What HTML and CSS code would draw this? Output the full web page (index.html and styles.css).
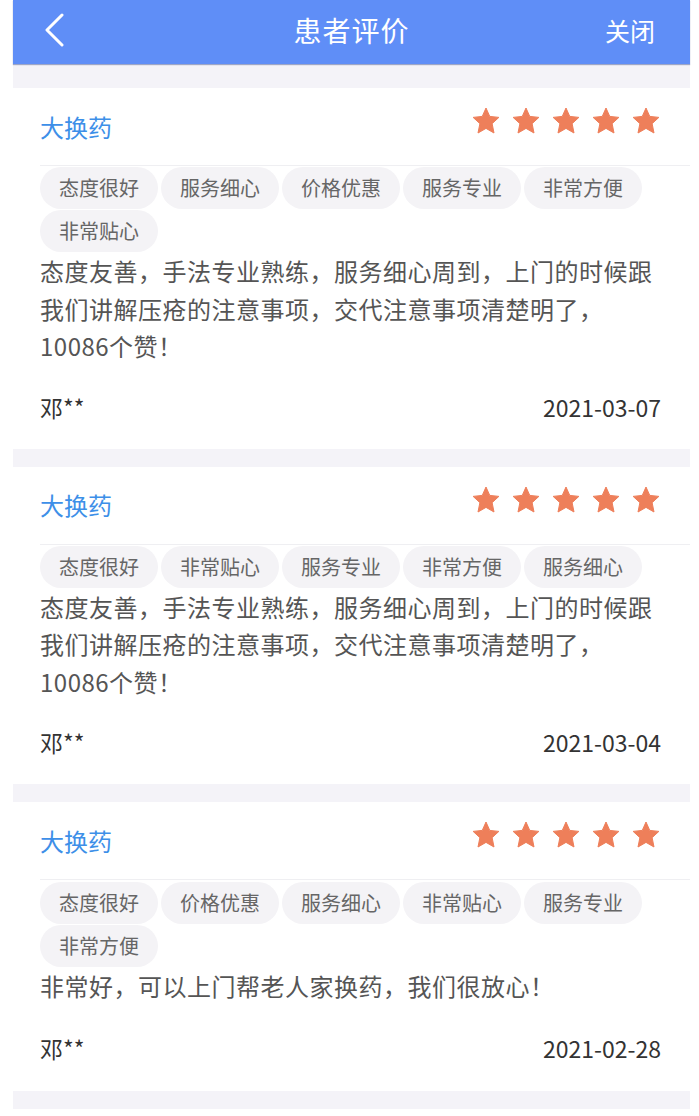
FILE: index.html
```html
<!DOCTYPE html>
<html lang="zh-CN">
<head>
<meta charset="utf-8">
<title>患者评价</title>
<link rel="stylesheet" href="styles.css">
</head>
<body>
<div class="app">
  <header class="nav">
    <span class="nav-back">
      <svg width="20" height="34" viewBox="0 0 20 34"><polyline points="17,2 2,17 17,32" fill="none" stroke="#fff" stroke-width="3" stroke-linecap="round" stroke-linejoin="round"/></svg>
    </span>
    <h1 class="nav-title">患者评价</h1>
    <span class="nav-close">关闭</span>
  </header>
  <main class="list">
    <section class="card">
      <div class="card-head">
        <span class="service">大换药</span>
        <span class="stars">
          <svg class="star" viewBox="0 0 24 24"><polygon points="12,1.6 15,8.3 22.3,9.1 16.9,14.1 18.4,21.6 12,17.9 5.6,21.6 7.1,14.1 1.7,9.1 9,8.3"/></svg>
          <svg class="star" viewBox="0 0 24 24"><polygon points="12,1.6 15,8.3 22.3,9.1 16.9,14.1 18.4,21.6 12,17.9 5.6,21.6 7.1,14.1 1.7,9.1 9,8.3"/></svg>
          <svg class="star" viewBox="0 0 24 24"><polygon points="12,1.6 15,8.3 22.3,9.1 16.9,14.1 18.4,21.6 12,17.9 5.6,21.6 7.1,14.1 1.7,9.1 9,8.3"/></svg>
          <svg class="star" viewBox="0 0 24 24"><polygon points="12,1.6 15,8.3 22.3,9.1 16.9,14.1 18.4,21.6 12,17.9 5.6,21.6 7.1,14.1 1.7,9.1 9,8.3"/></svg>
          <svg class="star" viewBox="0 0 24 24"><polygon points="12,1.6 15,8.3 22.3,9.1 16.9,14.1 18.4,21.6 12,17.9 5.6,21.6 7.1,14.1 1.7,9.1 9,8.3"/></svg>
        </span>
      </div>
      <div class="tags">
        <span class="tag">态度很好</span>
        <span class="tag">服务细心</span>
        <span class="tag">价格优惠</span>
        <span class="tag">服务专业</span>
        <span class="tag">非常方便</span>
        <span class="tag">非常贴心</span>
      </div>
      <p class="content">态度友善，手法专业熟练，服务细心周到，上门的时候跟我们讲解压疮的注意事项，交代注意事项清楚明了，10086个赞！</p>
      <div class="card-foot">
        <span class="user">邓**</span>
        <span class="date">2021-03-07</span>
      </div>
    </section>

    <section class="card">
      <div class="card-head">
        <span class="service">大换药</span>
        <span class="stars">
          <svg class="star" viewBox="0 0 24 24"><polygon points="12,1.6 15,8.3 22.3,9.1 16.9,14.1 18.4,21.6 12,17.9 5.6,21.6 7.1,14.1 1.7,9.1 9,8.3"/></svg>
          <svg class="star" viewBox="0 0 24 24"><polygon points="12,1.6 15,8.3 22.3,9.1 16.9,14.1 18.4,21.6 12,17.9 5.6,21.6 7.1,14.1 1.7,9.1 9,8.3"/></svg>
          <svg class="star" viewBox="0 0 24 24"><polygon points="12,1.6 15,8.3 22.3,9.1 16.9,14.1 18.4,21.6 12,17.9 5.6,21.6 7.1,14.1 1.7,9.1 9,8.3"/></svg>
          <svg class="star" viewBox="0 0 24 24"><polygon points="12,1.6 15,8.3 22.3,9.1 16.9,14.1 18.4,21.6 12,17.9 5.6,21.6 7.1,14.1 1.7,9.1 9,8.3"/></svg>
          <svg class="star" viewBox="0 0 24 24"><polygon points="12,1.6 15,8.3 22.3,9.1 16.9,14.1 18.4,21.6 12,17.9 5.6,21.6 7.1,14.1 1.7,9.1 9,8.3"/></svg>
        </span>
      </div>
      <div class="tags">
        <span class="tag">态度很好</span>
        <span class="tag">非常贴心</span>
        <span class="tag">服务专业</span>
        <span class="tag">非常方便</span>
        <span class="tag">服务细心</span>
      </div>
      <p class="content">态度友善，手法专业熟练，服务细心周到，上门的时候跟我们讲解压疮的注意事项，交代注意事项清楚明了，10086个赞！</p>
      <div class="card-foot">
        <span class="user">邓**</span>
        <span class="date">2021-03-04</span>
      </div>
    </section>

    <section class="card">
      <div class="card-head">
        <span class="service">大换药</span>
        <span class="stars">
          <svg class="star" viewBox="0 0 24 24"><polygon points="12,1.6 15,8.3 22.3,9.1 16.9,14.1 18.4,21.6 12,17.9 5.6,21.6 7.1,14.1 1.7,9.1 9,8.3"/></svg>
          <svg class="star" viewBox="0 0 24 24"><polygon points="12,1.6 15,8.3 22.3,9.1 16.9,14.1 18.4,21.6 12,17.9 5.6,21.6 7.1,14.1 1.7,9.1 9,8.3"/></svg>
          <svg class="star" viewBox="0 0 24 24"><polygon points="12,1.6 15,8.3 22.3,9.1 16.9,14.1 18.4,21.6 12,17.9 5.6,21.6 7.1,14.1 1.7,9.1 9,8.3"/></svg>
          <svg class="star" viewBox="0 0 24 24"><polygon points="12,1.6 15,8.3 22.3,9.1 16.9,14.1 18.4,21.6 12,17.9 5.6,21.6 7.1,14.1 1.7,9.1 9,8.3"/></svg>
          <svg class="star" viewBox="0 0 24 24"><polygon points="12,1.6 15,8.3 22.3,9.1 16.9,14.1 18.4,21.6 12,17.9 5.6,21.6 7.1,14.1 1.7,9.1 9,8.3"/></svg>
        </span>
      </div>
      <div class="tags tags-loose">
        <span class="tag">态度很好</span>
        <span class="tag">价格优惠</span>
        <span class="tag">服务细心</span>
        <span class="tag">非常贴心</span>
        <span class="tag">服务专业</span>
        <span class="tag">非常方便</span>
      </div>
      <p class="content">非常好，可以上门帮老人家换药，我们很放心！</p>
      <div class="card-foot card-foot-tall">
        <span class="user">邓**</span>
        <span class="date">2021-02-28</span>
      </div>
    </section>

    <section class="card card-peek"></section>
  </main>
</div>
</body>
</html>
```

FILE: styles.css
```css
html, body {
  margin: 0;
  padding: 0;
  background: #ffffff;
}

body {
  font-family: "Noto Sans CJK SC", "Noto Sans", sans-serif;
}

.app {
  margin: 0 9px 0 13px;
  background: #f4f3f8;
  min-height: 1116px;
}

.nav {
  display: grid;
  grid-template-columns: 1fr auto 1fr;
  align-items: center;
  height: 60px;
  padding-bottom: 4px;
  background: #5f8ef7;
  box-shadow: 0 1px 1px rgba(70, 90, 150, 0.5);
  color: #ffffff;
}

.nav-back {
  display: flex;
  align-items: center;
  padding-left: 32px;
  height: 34px;
}

.nav-title {
  margin: 0;
  font-size: 28px;
  font-weight: 400;
  line-height: 1;
  letter-spacing: 1px;
}

.nav-close {
  justify-self: end;
  padding-right: 35px;
  font-size: 25px;
  line-height: 1;
}

.list {
  display: flex;
  flex-direction: column;
  gap: 18px;
  padding-top: 24px;
}

.card {
  background: #ffffff;
  padding-left: 27px;
}

.card-peek {
  height: 40px;
}

.card-head {
  display: flex;
  justify-content: space-between;
  align-items: center;
  height: 77px;
  padding-right: 29px;
  border-bottom: 1px solid #efeff2;
}

.service {
  font-size: 24px;
  line-height: 1;
  color: #3d8fe8;
}

.stars {
  align-self: flex-start;
  display: flex;
  gap: 10px;
  margin-top: 18px;
}

.star {
  width: 30px;
  height: 30px;
  fill: #ee7f5a;
  stroke: #ee7f5a;
  stroke-width: 0.8;
  stroke-linejoin: round;
}

.tags {
  display: flex;
  flex-wrap: wrap;
  gap: 1px 3px;
  margin-top: 1px;
  padding-right: 29px;
}

.tags-loose {
  margin-top: 2px;
}

.tag {
  height: 42px;
  line-height: 42px;
  padding: 0 19px;
  border-radius: 21px;
  background: #f4f3f6;
  color: #666666;
  font-size: 20px;
}

.content {
  margin: 0;
  padding-right: 29px;
  font-size: 24px;
  letter-spacing: 0.5px;
  line-height: 37.5px;
  color: #555555;
}

.card-foot {
  display: flex;
  justify-content: space-between;
  align-items: center;
  height: 84px;
  padding-right: 29px;
  font-size: 23px;
  color: #333333;
}

.card-foot-tall {
  height: 86px;
}
```
